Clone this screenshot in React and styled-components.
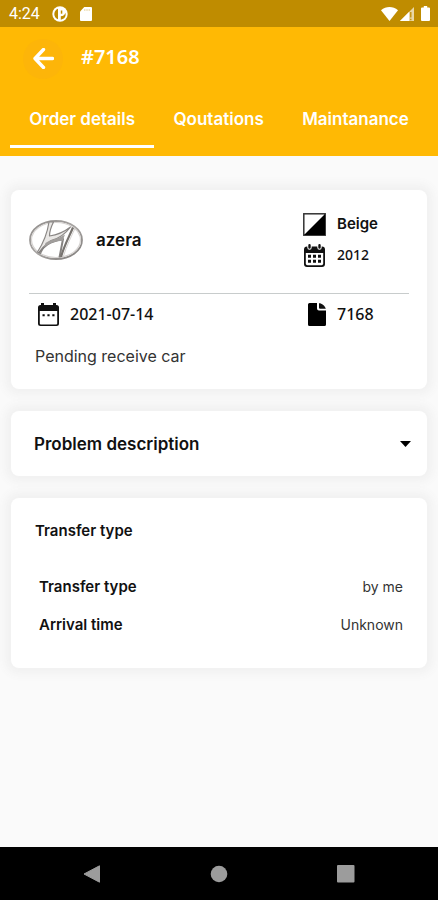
import React, { useState } from 'react';
import styled, { createGlobalStyle } from 'styled-components';

const tabs = ['Order details', 'Qoutations', 'Maintanance'];

function StatusBar() {
    return (
        <Status>
            <StatusGroup>
                <Clock>4:24</Clock>
                <svg width="16" height="16" viewBox="0 0 16 16">
                    <circle cx="8" cy="8" r="7.7" fill="#fff" />
                    <path d="M6 2.800C2.800 4 1.800 7.500 2.700 10C3.300 11.700 4.500 12.800 6 13.200z" fill="#bf8c00" />
                    <path d="M8.800 13.700V10.300C11.500 10.300 12.800 8.800 13.300 6.800C14.500 10 12.500 13.300 8.800 13.700z" fill="#bf8c00" />
                    <path d="M8.800 4.500h1.500v3.200H8.800z" fill="#bf8c00" />
                </svg>
                <svg width="12" height="14" viewBox="0 0 12 14">
                    <path d="M4.3 0H11a1 1 0 0 1 1 1v12a1 1 0 0 1-1 1H1a1 1 0 0 1-1-1V4.5z" fill="#fff" />
                    <path d="M4.800 2v2M7 2v2M9.200 2v2" stroke="#e3cb8c" strokeWidth=".8" />
                </svg>
            </StatusGroup>
            <StatusIcons>
                <svg width="17" height="14" viewBox="0 0 17 14">
                    <path d="M0 3.2C5-1 12-1 17 3.2L8.5 14z" fill="#fff" />
                </svg>
                <svg width="14" height="14" viewBox="0 0 14 14">
                    <path d="M14 0v14H0z" fill="#fff" opacity=".65" />
                    <path d="M9 5v9H0z" fill="#fff" />
                    <path d="M10.8 5v5.5M10.8 11.8v1.4" stroke="#bf8c00" strokeWidth="1.3" />
                </svg>
                <BatteryIcon width="9" height="15" viewBox="0 0 9 15">
                    <path d="M2.800 0h3.400v1.500H8a1 1 0 0 1 1 1V14a1 1 0 0 1-1 1H1a1 1 0 0 1-1-1V2.500a1 1 0 0 1 1-1h1.800z" fill="#fff" />
                </BatteryIcon>
            </StatusIcons>
        </Status>
    )
}

function BrandLogo() {
    return (
        <svg width="54" height="40" viewBox="0 0 54 40" role="img" aria-label="Hyundai">
            <defs>
                <linearGradient id="chrome" x1="0" y1="0" x2="1" y2="1">
                    <stop offset="0" stopColor="#8f8c8a" />
                    <stop offset=".5" stopColor="#a8a5a3" />
                    <stop offset="1" stopColor="#7d7a78" />
                </linearGradient>
            </defs>
            <ellipse cx="27" cy="20" rx="26" ry="19" fill="none" stroke="url(#chrome)" strokeWidth="1.800" />
            <ellipse cx="27" cy="20" rx="24.500" ry="17.500" fill="none" stroke="#d6d3d1" strokeWidth="1.200" />
            {/* left leg and upper swoosh */}
            <path d="M20 2C18.500 12 15 22 8.500 32L11.500 33.500C14 27.500 17 24 22 20.500C30 18.500 36 14.500 41.500 7C35 12 28 15 20.500 16C20.500 11.500 22.500 6 24.500 2z" fill="#e9e7e5" stroke="#8a8785" strokeWidth="1.200" strokeLinejoin="round" />
            {/* lower swoosh */}
            <path d="M10 33C14.500 26 20 21.500 34 19L30.500 37.500" fill="none" stroke="#858280" strokeWidth="2" strokeLinejoin="round" />
            <path d="M16.500 23C22 19.500 29 19 36 14.500L33.500 21C27 21 21 22.500 15 27.500z" fill="#a19e9c" />
            {/* right leg */}
            <path d="M44 7.500C40 17 35 26 32 37" fill="none" stroke="#77736f" strokeWidth="2.200" />
            <path d="M46 8.500C42 17 37.500 26 34.500 36" fill="none" stroke="#d6d3d1" strokeWidth="1" />
        </svg>
    )
}

function ContrastIcon() {
    return (
        <svg width="23" height="23" viewBox="0 0 23 23">
            <rect x=".8" y=".8" width="21.400" height="21.400" fill="#fff" stroke="#333" strokeWidth="1.500" />
            <path d="M22 1v21H1z" fill="#000" />
        </svg>
    )
}

function CalendarIcon() {
    return (
        <svg width="21" height="23" viewBox="0 0 21 23">
            <path d="M3 2.500h15a3 3 0 0 1 3 3v14.500a3 3 0 0 1-3 3H3a3 3 0 0 1-3-3V5.500a3 3 0 0 1 3-3z" fill="#111" />
            <path d="M1.800 9h17.400v10.500a1.700 1.700 0 0 1-1.700 1.700h-14a1.700 1.700 0 0 1-1.700-1.700z" fill="#fff" />
            <path d="M5.500 1v2.500M15.500 1v2.500" stroke="#fff" strokeWidth="4.400" strokeLinecap="round" />
            <path d="M5.500 1.300v2.200M15.500 1.300v2.200" stroke="#111" strokeWidth="2.400" strokeLinecap="round" />
            <path d="M4 12.300h13M4 17.300h13" stroke="#111" strokeWidth="3" strokeDasharray="3 2" />
        </svg>
    )
}

function DateIcon() {
    return (
        <svg width="21" height="23" viewBox="0 0 21 23">
            <path d="M3 0h3v2h9V0h3v2h.5A2.500 2.500 0 0 1 21 4.500v16a2.500 2.500 0 0 1-2.500 2.500h-16A2.500 2.500 0 0 1 0 20.500v-16A2.500 2.500 0 0 1 2.500 2H3z" fill="#111" />
            <path d="M1.800 8h17.400v12.500a1 1 0 0 1-1 1H2.800a1 1 0 0 1-1-1z" fill="#fff" />
            <path d="M4.500 12.200h2.200M9.400 12.200h2.200M14.300 12.200h2.200" stroke="#111" strokeWidth="2" />
        </svg>
    )
}

function FileIcon() {
    return (
        <svg width="18" height="23" viewBox="0 0 18 23">
            <path d="M1.500 0H9v5.500a2 2 0 0 0 2 2h7v14a1.500 1.500 0 0 1-1.500 1.500h-15A1.500 1.500 0 0 1 0 21.500v-20A1.500 1.500 0 0 1 1.500 0z" fill="#000" />
            <path d="M11 .3c3 0 6 2.500 6.800 5.500H12a1 1 0 0 1-1-1z" fill="#111" />
        </svg>
    )
}

function App() {
    const [active, setActive] = useState(0);
    const [open, setOpen] = useState(false);

    return (
        <Screen>
            <GlobalStyle />
            <StatusBar />

            <Header>
                <TitleRow>
                    <BackButton type="button" aria-label="Back">
                        <svg width="21" height="21" viewBox="0 0 21 21">
                            <path d="M10.500 1.500l-8.500 9 8.500 9M2.500 10.500h17" fill="none" stroke="#fff" strokeWidth="3.400" strokeLinecap="round" strokeLinejoin="round" />
                        </svg>
                    </BackButton>
                    <Title>#7168</Title>
                </TitleRow>
                <Tabs role="tablist">
                    {tabs.map((tab, i) => (
                        <Tab key={tab} type="button" role="tab" aria-selected={i === active} $active={i === active} onClick={() => setActive(i)}>
                            {tab}
                        </Tab>
                    ))}
                </Tabs>
            </Header>

            <Content>
                <Card>
                    <CarRow>
                        <Car>
                            <BrandLogo />
                            <CarName>azera</CarName>
                        </Car>
                        <Specs>
                            <Spec>
                                <IconBox><ContrastIcon /></IconBox>
                                <SpecText>Beige</SpecText>
                            </Spec>
                            <Spec>
                                <IconBox><CalendarIcon /></IconBox>
                                <SpecNumber>2012</SpecNumber>
                            </Spec>
                        </Specs>
                    </CarRow>
                    <OrderRow>
                        <OrderDate>
                            <DateIcon />
                            <Value>2021-07-14</Value>
                        </OrderDate>
                        <Spec>
                            <IconBox $end><FileIcon /></IconBox>
                            <Value>7168</Value>
                        </Spec>
                    </OrderRow>
                    <OrderState>Pending receive car</OrderState>
                </Card>

                <Card>
                    <Accordion type="button" aria-expanded={open} onClick={() => setOpen(!open)}>
                        Problem description
                        <svg width="11" height="6" viewBox="0 0 11 6">
                            <path d="M0 0h11L5.500 6z" fill="#000" />
                        </svg>
                    </Accordion>
                </Card>

                <Card>
                    <Transfer>
                        <TransferTitle>Transfer type</TransferTitle>
                        <Details>
                            <Detail>
                                <Label>Transfer type</Label>
                                <Info>by me</Info>
                            </Detail>
                            <Detail>
                                <Label>Arrival time</Label>
                                <Info>Unknown</Info>
                            </Detail>
                        </Details>
                    </Transfer>
                </Card>
            </Content>

            <NavBar>
                <NavButton type="button" aria-label="Back">
                    <svg width="18" height="18" viewBox="0 0 18 18">
                        <path d="M16.500 .8v16.400L1 9z" fill="#9c9c9c" stroke="#9c9c9c" strokeLinejoin="round" />
                    </svg>
                </NavButton>
                <NavButton type="button" aria-label="Home">
                    <svg width="18" height="18" viewBox="0 0 18 18">
                        <circle cx="9" cy="9" r="8.300" fill="#9c9c9c" />
                    </svg>
                </NavButton>
                <NavButton type="button" aria-label="Recent apps">
                    <svg width="18" height="18" viewBox="0 0 18 18">
                        <rect width="17.500" height="17.500" rx="1" fill="#9c9c9c" />
                    </svg>
                </NavButton>
            </NavBar>
        </Screen>
    )
}

export default App

const GlobalStyle = createGlobalStyle`
* {
    box-sizing: border-box;
}

body {
    margin: 0;
    background: #fafafa;
    color: #111;
    font-family: Inter, "Liberation Sans", sans-serif;
}

button {
    border: none;
    background: none;
    padding: 0;
    color: inherit;
    font-family: inherit;
    cursor: pointer;
}

svg {
    display: block;
    flex-shrink: 0;
}
`

const Screen = styled.div`
display: flex;
flex-direction: column;
min-height: 100vh;
`

const Status = styled.div`
display: flex;
align-items: center;
justify-content: space-between;
height: 27px;
padding: 0 8px 0 9px;
background: #bf8c00;
color: #fff;
`

const StatusGroup = styled.div`
display: flex;
align-items: center;
gap: 12px;
`

const StatusIcons = styled.div`
display: flex;
align-items: center;
gap: 2px;
`

const BatteryIcon = styled.svg`
margin-left: 5px;
`

const Clock = styled.span`
font-family: Roboto, sans-serif;
font-size: 16px;
`

const Header = styled.header`
background: #ffb904;
color: #fff;
`

const TitleRow = styled.div`
display: flex;
align-items: center;
gap: 18px;
height: 63px;
padding-left: 23px;
`

const BackButton = styled.button`
display: flex;
align-items: center;
justify-content: center;
width: 40px;
height: 40px;
border-radius: 50%;
background: #fdb509;
`

const Title = styled.h1`
margin: 0;
padding-bottom: 4px;
font-family: "Noto Sans", sans-serif;
font-size: 20px;
line-height: 30px;
font-weight: 600;
`

const Tabs = styled.div`
display: flex;
padding: 0 10px 8px;
`

const Tab = styled.button`
flex: 1 1 auto;
height: 58px;
padding-top: 2px;
border-bottom: 3px solid ${(props) => (props.$active ? '#fff' : 'transparent')};
font-size: 17px;
font-weight: 600;
white-space: nowrap;
`

const Content = styled.main`
display: flex;
flex-direction: column;
flex: 1;
gap: 22px;
padding: 34px 11px;
`

const Card = styled.section`
border-radius: 8px;
background: #fff;
box-shadow: 0 0 10px 6px #f1f1f1;
`

const CarRow = styled.div`
display: flex;
align-items: center;
justify-content: space-between;
margin: 0 18px;
padding: 22px 0 26px;
border-bottom: 1px solid #c8cccc;
`

const Car = styled.div`
display: flex;
align-items: center;
gap: 13px;
`

const CarName = styled.h2`
margin: 0;
font-size: 17px;
line-height: 24px;
font-weight: 600;
`

const Specs = styled.div`
display: flex;
flex-direction: column;
gap: 7px;
`

const Spec = styled.div`
display: flex;
align-items: center;
gap: 11px;
width: 106px;
`

const IconBox = styled.span`
display: flex;
justify-content: ${(props) => (props.$end ? 'flex-end' : 'center')};
width: 23px;
`

const SpecText = styled.span`
font-size: 15px;
line-height: 24px;
font-weight: 600;
`

const SpecNumber = styled.span`
font-family: "Noto Sans", sans-serif;
font-size: 14px;
line-height: 24px;
font-weight: 500;
`

const OrderRow = styled.div`
display: flex;
align-items: center;
justify-content: space-between;
margin: 0 18px;
padding: 8px 0 0 9px;
`

const OrderDate = styled.div`
display: flex;
align-items: center;
gap: 11px;
`

const Value = styled.span`
font-family: "Noto Sans", sans-serif;
font-size: 16px;
line-height: 24px;
font-weight: 500;
`

const OrderState = styled.p`
margin: 0;
padding: 18px 24px 21px;
color: #333;
font-size: 16px;
line-height: 24px;
`

const Accordion = styled.button`
display: flex;
align-items: center;
justify-content: space-between;
width: 100%;
height: 65px;
padding: 0 16px 0 23px;
font-size: 17px;
font-weight: 600;
`

const Transfer = styled.div`
padding: 21px 24px 31px;
`

const TransferTitle = styled.h2`
margin: 0;
font-size: 15px;
line-height: 24px;
font-weight: 600;
`

const Details = styled.dl`
display: flex;
flex-direction: column;
gap: 14px;
margin: 32px 0 0;
padding-left: 4px;
`

const Detail = styled.div`
display: flex;
justify-content: space-between;
font-size: 15px;
line-height: 24px;
`

const Label = styled.dt`
font-weight: 600;
`

const Info = styled.dd`
margin: 0;
color: #333;
font-size: 14px;
`

const NavBar = styled.nav`
display: flex;
height: 53px;
padding: 0 29px;
background: #000;
`

const NavButton = styled.button`
display: flex;
flex: 1;
align-items: center;
justify-content: center;
`
